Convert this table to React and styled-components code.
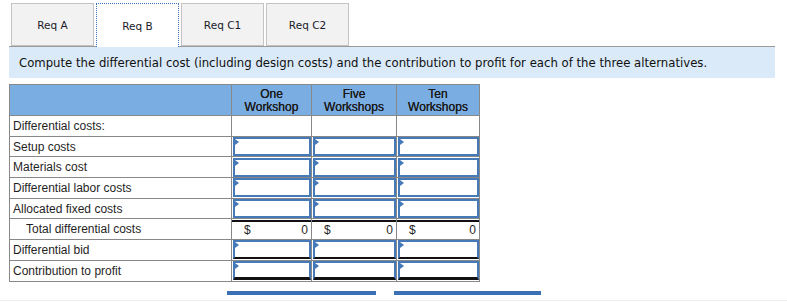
import styled, { createGlobalStyle } from 'styled-components';

const GlobalStyle = createGlobalStyle`
  body {
    margin: 0;
    background: #fff;
    font-family: "DejaVu Sans", Verdana, sans-serif;
  }
`;

const tabs = ['Req A', 'Req B', 'Req C1', 'Req C2'];

const rows = [
  { label: 'Differential costs:', kind: 'blank' },
  { label: 'Setup costs', kind: 'input' },
  { label: 'Materials cost', kind: 'input' },
  { label: 'Differential labor costs', kind: 'input' },
  { label: 'Allocated fixed costs', kind: 'input' },
  { label: 'Total differential costs', kind: 'total', indent: true },
  { label: 'Differential bid', kind: 'input', under: 'single' },
  { label: 'Contribution to profit', kind: 'input', under: 'double' },
];

const Page = styled.div`
  width: 787px;
  height: 302px;
  overflow: hidden;
  padding: 3px 0 0 9px;
  box-sizing: border-box;
`;

const TabBar = styled.div`
  display: flex;
  gap: 2px;
  padding-left: 2px;
  width: 766px;
  box-sizing: border-box;
  border-bottom: 1px solid #9a9a9a;
  height: 44px;
`;

const Tab = styled.div`
  width: 83px;
  height: ${p => (p.$active ? '44px' : '43px')};
  box-sizing: border-box;
  display: flex;
  align-items: center;
  justify-content: center;
  font-size: 10.5px;
  color: #1a1a2a;
  background: ${p => (p.$active ? '#fff' : '#f2f2f2')};
  border: ${p => (p.$active ? '1px dotted #3a72b8' : '1px solid #c4c4c4')};
  border-bottom: ${p => (p.$active ? 'none' : '1px solid #c4c4c4')};
  position: relative;
  z-index: ${p => (p.$active ? 1 : 0)};
`;

const Instruction = styled.div`
  width: 766px;
  height: 31px;
  background: #daeaf8;
  box-sizing: border-box;
  padding-left: 10px;
  display: flex;
  align-items: center;
  font-size: 11.7px;
  color: #111;
`;

const Table = styled.table`
  margin-top: 6px;
  border-collapse: collapse;
  font-family: "Liberation Sans", Arial, sans-serif;
  font-size: 12px;
  color: #1f1f1f;
`;

const HeadCell = styled.th`
  background: #7aaee3;
  border: 1px solid #888;
  height: 29px;
  width: ${p => p.$w}px;
  padding: 1px 0 0;
  font-weight: normal;
  font-size: 12px;
  line-height: 13px;
  color: #1a1a1a;
  text-shadow: 0 0 0.4px #1a1a1a;
  text-align: center;
  vertical-align: middle;
`;

const LabelCell = styled.td`
  border: 1px solid #888;
  height: 19.7px;
  padding: 0 0 0 ${p => (p.$indent ? '16px' : '3px')};
  white-space: nowrap;
`;

const ValueCell = styled.td`
  border: 1px solid #888;
  padding: 0;
  height: 19.7px;
  position: relative;
`;

const InputBox = styled.div`
  height: 19px;
  box-sizing: border-box;
  border: 2px solid #4679b8;
  border-bottom-color: ${p => (p.$under ? '#111' : '#4679b8')};
  border-bottom-width: ${p => (p.$under === 'double' ? '3px' : '2px')};
  margin: 0 0 0 1px;
  position: relative;
  background: #fff;

  &::before {
    content: '';
    position: absolute;
    left: 0;
    top: 0;
    border-top: 3px solid transparent;
    border-bottom: 3px solid transparent;
    border-left: 4px solid #4679b8;
  }
`;

const TotalBox = styled.div`
  display: flex;
  justify-content: space-between;
  padding: 0 3px 0 12px;
  border-top: 2px solid #111;
  height: 19px;
  box-sizing: border-box;
  align-items: center;
`;

const FooterBars = styled.div`
  display: flex;
  gap: 18px;
  margin: 9px 0 0 218px;
`;

const Bar = styled.div`
  width: ${p => p.$w}px;
  height: 4px;
  background: #3c70b4;
`;

const Rule = styled.div`
  margin: 5px 0 0 -9px;
  height: 1px;
  background: #ececec;
  width: 787px;
`;

const cols = [
  ['One', 'Workshop', 79],
  ['Five', 'Workshops', 84],
  ['Ten', 'Workshops', 82],
];

export default function App() {
  return (
    <Page>
      <GlobalStyle />
      <TabBar>
        {tabs.map(t => (
          <Tab key={t} $active={t === 'Req B'}>{t}</Tab>
        ))}
      </TabBar>
      <Instruction>
        Compute the differential cost (including design costs) and the contribution to profit for each of the three alternatives.
      </Instruction>
      <Table>
        <thead>
          <tr>
            <HeadCell $w={221} />
            {cols.map(([a, b, w]) => (
              <HeadCell key={a} $w={w}>{a}<br />{b}</HeadCell>
            ))}
          </tr>
        </thead>
        <tbody>
          {rows.map(r => (
            <tr key={r.label}>
              <LabelCell $indent={r.indent}>{r.label}</LabelCell>
              {cols.map(([a]) => (
                <ValueCell key={a}>
                  {r.kind === 'input' && <InputBox $under={r.under} />}
                  {r.kind === 'total' && (
                    <TotalBox><span>$</span><span>0</span></TotalBox>
                  )}
                </ValueCell>
              ))}
            </tr>
          ))}
        </tbody>
      </Table>
      <FooterBars>
        <Bar $w={149} />
        <Bar $w={147} />
      </FooterBars>
      <Rule />
    </Page>
  );
}
